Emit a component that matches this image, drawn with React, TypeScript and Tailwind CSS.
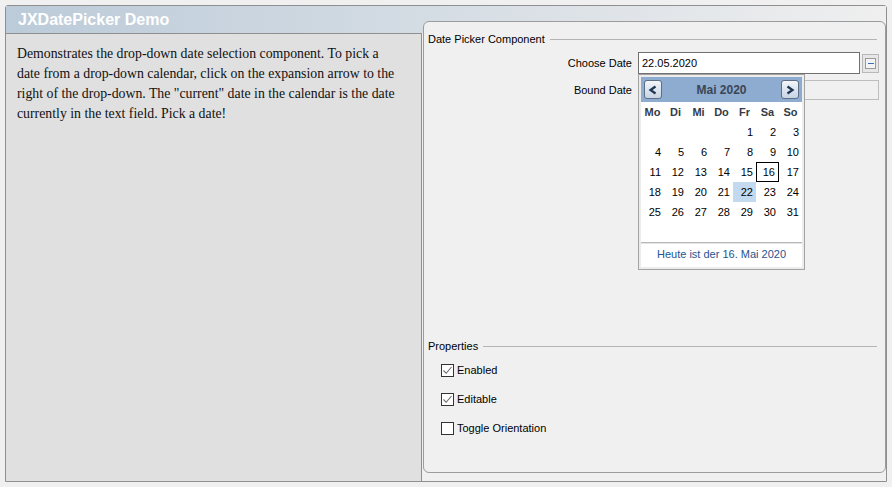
const WEEKDAYS = ['Mo', 'Di', 'Mi', 'Do', 'Fr', 'Sa', 'So'];

// Mai 2020 starts on a Friday
const DAYS: (number | null)[] = [
  null, null, null, null, 1, 2, 3,
  4, 5, 6, 7, 8, 9, 10,
  11, 12, 13, 14, 15, 16, 17,
  18, 19, 20, 21, 22, 23, 24,
  25, 26, 27, 28, 29, 30, 31,
];

const DESCRIPTION = [
  'Demonstrates the drop-down date selection component. To pick a',
  'date from a drop-down calendar, click on the expansion arrow to the',
  'right of the drop-down. The "current" date in the calendar is the date',
  'currently in the text field. Pick a date!',
];

function Legend({ label }: { label: string }) {
  return (
    <div className="flex items-center h-[14px] pr-[8px]">
      <span className="text-[11px] leading-[14px] text-black">{label}</span>
      <div className="flex-1 h-px bg-[#b4b4b4] ml-[5px]" />
    </div>
  );
}

function Check({ label, checked }: { label: string; checked: boolean }) {
  return (
    <div className="flex items-center h-[20px] pl-[13px]">
      <div className="w-[13px] h-[13px] border border-[#333] bg-white flex items-center justify-center">
        {checked && (
          <svg width="11" height="11" viewBox="0 0 11 11">
            <path d="M1.5 5.5 L4.2 8.3 L9.5 2" fill="none" stroke="#6a6a6a" strokeWidth="1.1" />
          </svg>
        )}
      </div>
      <span className="ml-[3px] text-[11px] text-black">{label}</span>
    </div>
  );
}

function NavButton({ dir }: { dir: '<' | '>' }) {
  return (
    <div className="w-[18px] h-[19px] rounded-[3px] border border-[#5d6f86] bg-gradient-to-b from-[#f3f6fa] to-[#c7d4e3] flex items-center justify-center">
      <svg width="10" height="10" viewBox="0 0 10 10">
        {dir === '<' ? (
          <path d="M7.5 1.5 L2.5 5 L7.5 8.5" fill="none" stroke="#1d3553" strokeWidth="2.2" />
        ) : (
          <path d="M2.5 1.5 L7.5 5 L2.5 8.5" fill="none" stroke="#1d3553" strokeWidth="2.2" />
        )}
      </svg>
    </div>
  );
}

function CalendarPopup() {
  return (
    <div className="absolute left-0 top-full w-[167px] h-[196px] border border-[#a3a3a3] bg-[#ececec] p-[2px] z-10">
      <div className="bg-white h-full flex flex-col">
        <div className="h-[25px] bg-[#8eabd0] flex items-center justify-between px-[3px]">
          <NavButton dir="<" />
          <span className="text-[12px] font-bold text-[#3a4656]">Mai 2020</span>
          <NavButton dir=">" />
        </div>
        <div className="grid grid-cols-7 h-[20px] items-center">
          {WEEKDAYS.map(d => (
            <div key={d} className="text-center text-[11px] font-bold text-[#333b47]">
              {d}
            </div>
          ))}
        </div>
        <div className="grid grid-cols-7 auto-rows-[20px] h-[120px]">
          {DAYS.map((d, i) => (
            <div
              key={i}
              className={`flex items-center justify-end pr-[3px] text-[11px] text-black ${
                d === 16 ? 'border border-black' : ''
              } ${d === 22 ? 'bg-[#c3d9ef]' : ''}`}
            >
              {d ?? ''}
            </div>
          ))}
        </div>
        <div className="h-[2px] border-t border-[#b8b8b8] border-b border-b-[#e4e4e4]" />
        <div className="h-[20px] flex items-center justify-center text-[11px] text-[#24548f]">
          Heute ist der 16. Mai 2020
        </div>
      </div>
    </div>
  );
}

export default function App() {
  return (
    <div className="w-[892px] h-[487px] bg-[#f0f0f0] p-[5px] font-['Liberation_Sans',Arial,sans-serif]">
      <div className="h-[477px] border border-[#8f8f8f] rounded-t-[3px] flex flex-col">
        {/* Title bar */}
        <div className="h-[27px] bg-gradient-to-r from-[#bccbd9] to-[#efefef] flex items-center pl-[12px]">
          <span className="text-white font-bold text-[16px]">JXDatePicker Demo</span>
        </div>

        <div className="flex flex-1 min-h-0">
          {/* Description */}
          <div className="w-[416px] bg-[#e0e0e0] border-t border-r border-[#8f8f8f] pt-[10px] pl-[11px]">
            <div className="font-['Liberation_Serif',serif] text-[13.8px] leading-[20px] text-[#111]">
              {DESCRIPTION.map((line, i) => (
                <div key={i} className="whitespace-nowrap">{line}</div>
              ))}
            </div>
          </div>

          {/* Right panel */}
          <div className="flex-1 -mt-[12px] mb-[8px] ml-px border border-[#9c9c9c] rounded-[6px] bg-[#f0f0f0] pt-[10px] pl-[4px] relative">
            <Legend label="Date Picker Component" />

            <div className="h-[287px]">
              <div className="flex items-center mt-[6px]">
                <div className="w-[204px] text-right text-[11px] text-black">Choose Date</div>
                <div className="relative ml-[6px]">
                  <div className="w-[222px] h-[22px] border border-[#707070] bg-white flex items-center pl-[3px] text-[11px] text-black">
                    22.05.2020
                  </div>
                  <CalendarPopup />
                </div>
                <div className="ml-[2px] w-[17px] h-[19px] border border-[#b8b8b8] bg-[#e6e6e6] flex items-center justify-center">
                  <div className="w-[11px] h-[11px] border border-[#9a9a9a] bg-[#f3f3f3] flex items-center justify-center">
                    <div className="w-[6px] h-px bg-[#3a6cc0]" />
                  </div>
                </div>
              </div>

              <div className="flex items-center mt-[6px]">
                <div className="w-[204px] text-right text-[11px] text-black">Bound Date</div>
                <div className="ml-[6px] w-[241px] h-[20px] border border-[#bdbdbd] bg-[#f0f0f0]" />
              </div>
            </div>

            <Legend label="Properties" />
            <div className="mt-[7px] flex flex-col gap-[9px]">
              <Check label="Enabled" checked />
              <Check label="Editable" checked />
              <Check label="Toggle Orientation" checked={false} />
            </div>
          </div>
        </div>
      </div>
    </div>
  );
}
